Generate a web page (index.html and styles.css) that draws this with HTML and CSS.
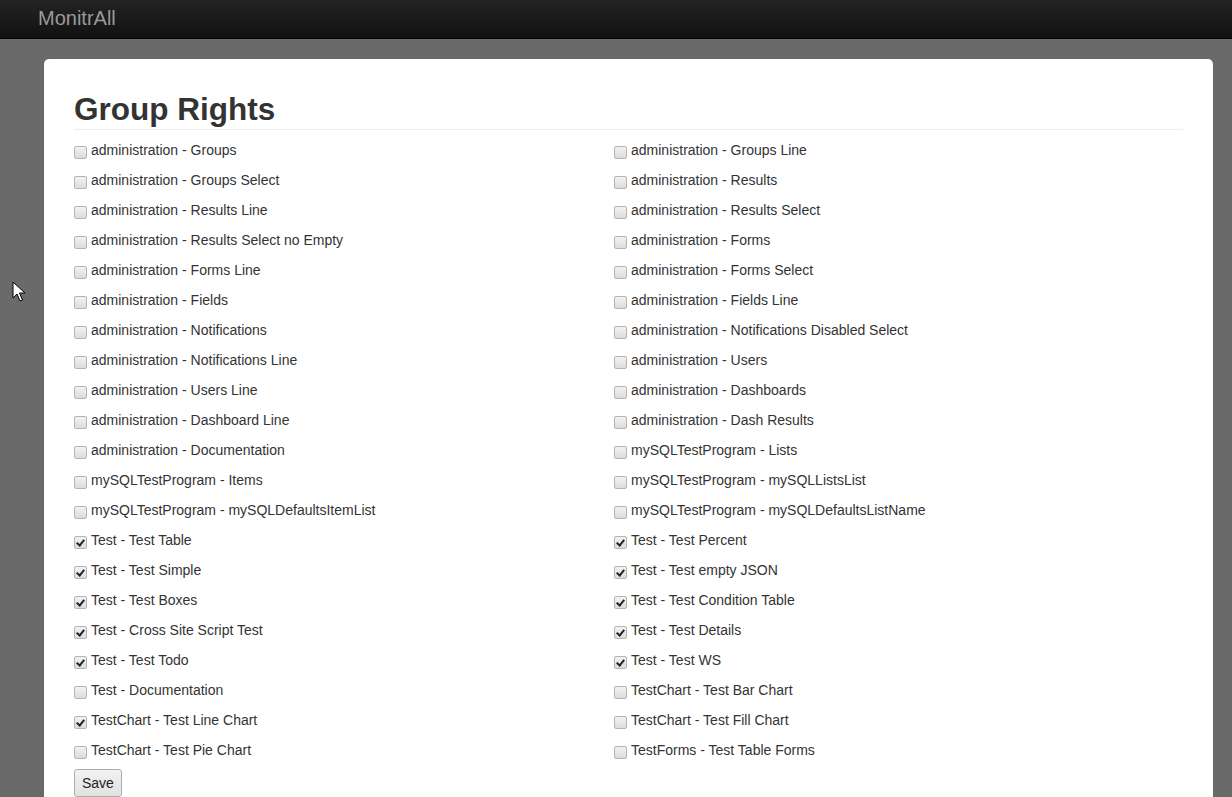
FILE: index.html
```html
<!DOCTYPE html>
<html>
<head>
<meta charset="utf-8">
<title>MonitrAll - Group Rights</title>
<link rel="stylesheet" href="styles.css">
</head>
<body>
<header class="navbar"><a class="brand" href="#">MonitrAll</a></header>
<main class="page">
  <section class="card">
    <h1 class="title">Group Rights</h1>
    <form class="rights">
      <div class="grid">
        <label class="item"><input type="checkbox"><span>administration - Groups</span></label>
        <label class="item"><input type="checkbox"><span>administration - Groups Line</span></label>
        <label class="item"><input type="checkbox"><span>administration - Groups Select</span></label>
        <label class="item"><input type="checkbox"><span>administration - Results</span></label>
        <label class="item"><input type="checkbox"><span>administration - Results Line</span></label>
        <label class="item"><input type="checkbox"><span>administration - Results Select</span></label>
        <label class="item"><input type="checkbox"><span>administration - Results Select no Empty</span></label>
        <label class="item"><input type="checkbox"><span>administration - Forms</span></label>
        <label class="item"><input type="checkbox"><span>administration - Forms Line</span></label>
        <label class="item"><input type="checkbox"><span>administration - Forms Select</span></label>
        <label class="item"><input type="checkbox"><span>administration - Fields</span></label>
        <label class="item"><input type="checkbox"><span>administration - Fields Line</span></label>
        <label class="item"><input type="checkbox"><span>administration - Notifications</span></label>
        <label class="item"><input type="checkbox"><span>administration - Notifications Disabled Select</span></label>
        <label class="item"><input type="checkbox"><span>administration - Notifications Line</span></label>
        <label class="item"><input type="checkbox"><span>administration - Users</span></label>
        <label class="item"><input type="checkbox"><span>administration - Users Line</span></label>
        <label class="item"><input type="checkbox"><span>administration - Dashboards</span></label>
        <label class="item"><input type="checkbox"><span>administration - Dashboard Line</span></label>
        <label class="item"><input type="checkbox"><span>administration - Dash Results</span></label>
        <label class="item"><input type="checkbox"><span>administration - Documentation</span></label>
        <label class="item"><input type="checkbox"><span>mySQLTestProgram - Lists</span></label>
        <label class="item"><input type="checkbox"><span>mySQLTestProgram - Items</span></label>
        <label class="item"><input type="checkbox"><span>mySQLTestProgram - mySQLListsList</span></label>
        <label class="item"><input type="checkbox"><span>mySQLTestProgram - mySQLDefaultsItemList</span></label>
        <label class="item"><input type="checkbox"><span>mySQLTestProgram - mySQLDefaultsListName</span></label>
        <label class="item"><input type="checkbox" checked><span>Test - Test Table</span></label>
        <label class="item"><input type="checkbox" checked><span>Test - Test Percent</span></label>
        <label class="item"><input type="checkbox" checked><span>Test - Test Simple</span></label>
        <label class="item"><input type="checkbox" checked><span>Test - Test empty JSON</span></label>
        <label class="item"><input type="checkbox" checked><span>Test - Test Boxes</span></label>
        <label class="item"><input type="checkbox" checked><span>Test - Test Condition Table</span></label>
        <label class="item"><input type="checkbox" checked><span>Test - Cross Site Script Test</span></label>
        <label class="item"><input type="checkbox" checked><span>Test - Test Details</span></label>
        <label class="item"><input type="checkbox" checked><span>Test - Test Todo</span></label>
        <label class="item"><input type="checkbox" checked><span>Test - Test WS</span></label>
        <label class="item"><input type="checkbox"><span>Test - Documentation</span></label>
        <label class="item"><input type="checkbox"><span>TestChart - Test Bar Chart</span></label>
        <label class="item"><input type="checkbox" checked><span>TestChart - Test Line Chart</span></label>
        <label class="item"><input type="checkbox"><span>TestChart - Test Fill Chart</span></label>
        <label class="item"><input type="checkbox"><span>TestChart - Test Pie Chart</span></label>
        <label class="item"><input type="checkbox"><span>TestForms - Test Table Forms</span></label>
      </div>
      <button type="button" class="btn">Save</button>
    </form>
  </section>
</main>
<svg class="cursor" width="14" height="22" viewBox="0 0 14 22"><path d="M1 1 L1 17 L5 13 L8 20 L10.5 19 L7.5 12 L13 12 Z" fill="#fff" stroke="#000" stroke-width="1" stroke-linejoin="miter"/></svg>
</body>
</html>
```
FILE: styles.css
```css
html, body {
  margin: 0;
  padding: 0;
}
body {
  background: #6a6a6a;
  font-family: "Liberation Sans", Arial, sans-serif;
  font-size: 14px;
  line-height: 20px;
  color: #333;
  height: 797px;
  overflow: hidden;
}
.navbar {
  height: 38px;
  background: linear-gradient(#232323, #111);
  border-bottom: 1px solid #000;
  display: flex;
  align-items: center;
}
.brand {
  margin-left: 38px;
  font-size: 20px;
  line-height: 36px;
  color: #9a9a9a;
  text-decoration: none;
  margin-top: -2px;
}
.page {
  padding: 20px 19px 0 44px;
}
.card {
  background: #fff;
  border-radius: 5px;
  padding: 0 30px 20px;
  box-shadow: 0 0 1px rgba(0,0,0,0.3);
}
.title {
  margin: 0 0 5px;
  padding: 33px 0 2px;
  font-size: 31.5px;
  line-height: 35px;
  font-weight: bold;
  color: #333;
  border-bottom: 1px solid #eee;
}
.grid {
  display: grid;
  grid-template-columns: 540px 540px;
}
.item {
  display: flex;
  align-items: center;
  height: 30px;
  cursor: pointer;
}
.item input {
  -webkit-appearance: none;
  appearance: none;
  width: 13px;
  height: 13px;
  margin: 5px 4px 0 0;
  border: 1px solid #b4b4b4;
  border-radius: 2px;
  background: linear-gradient(#f2f2f2, #dcdcdc);
  box-sizing: border-box;
  position: relative;
  flex: none;
}
.item input:checked::after {
  content: "";
  position: absolute;
  left: 3px;
  top: 1px;
  width: 3px;
  height: 6px;
  border: solid #222;
  border-width: 0 2px 2px 0;
  transform: rotate(40deg);
}
.btn {
  margin-top: 4px;
  font-family: "Liberation Sans", Arial, sans-serif;
  font-size: 14px;
  line-height: 20px;
  color: #222;
  padding: 3px 7px;
  height: 28px;
  border: 1px solid #acacac;
  border-radius: 3px;
  background: linear-gradient(#f2f2f2, #e2e2e2);
}
.cursor {
  position: absolute;
  left: 12px;
  top: 281px;
}
```
